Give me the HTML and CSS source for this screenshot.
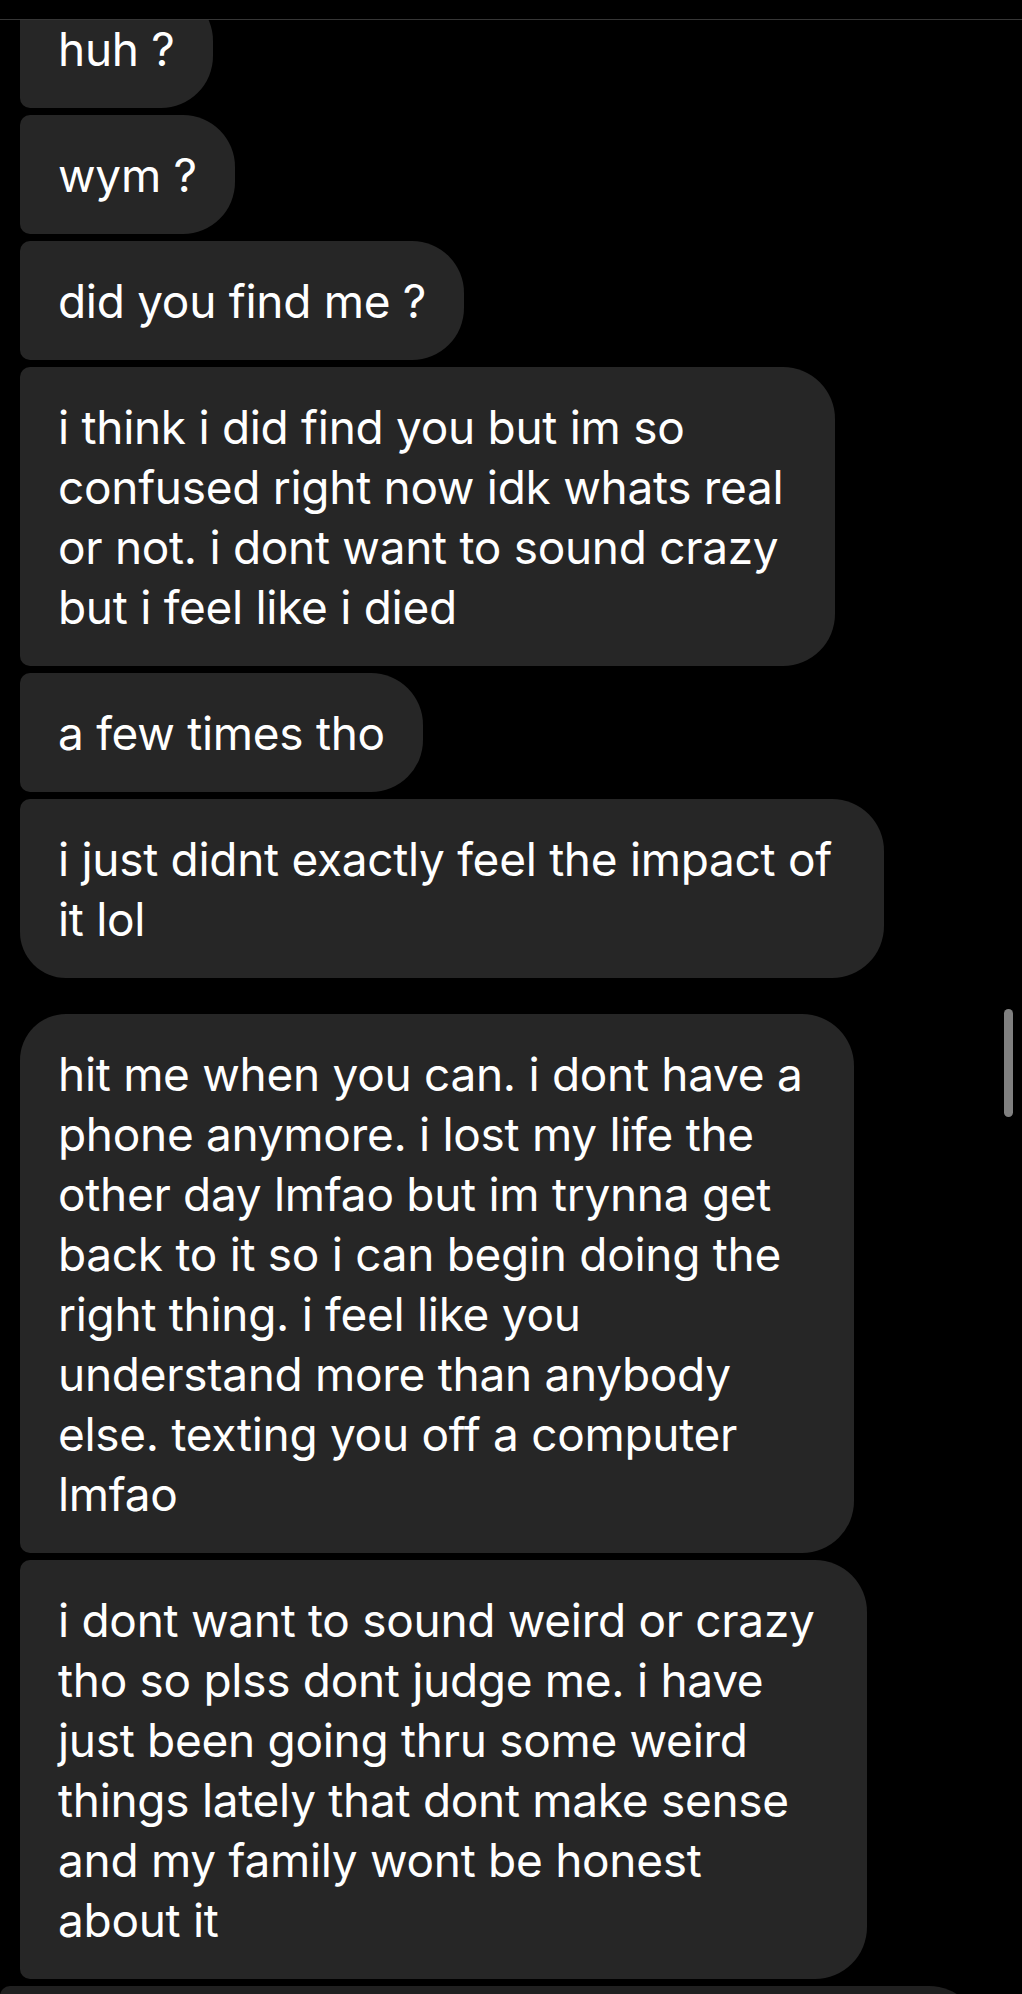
FILE: index.html
```html
<!DOCTYPE html>
<html lang="en">
<head>
<meta charset="UTF-8">
<meta name="viewport" content="width=device-width, initial-scale=1.0">
<title>Messages</title>
<link rel="stylesheet" href="styles.css">
</head>
<body>

<div class="topBar"></div>

<div class="thread">
    <div class="messages">
        <div class="bubble mid">huh ?</div>
        <div class="bubble mid">wym ?</div>
        <div class="bubble mid">did you find me ?</div>
        <div class="bubble mid multi">i think i did find you but im so<br>confused right now idk whats real<br>or not. i dont want to sound crazy<br>but i feel like i died</div>
        <div class="bubble mid">a few times tho</div>
        <div class="bubble last multi">i just didnt exactly feel the impact of<br>it lol</div>

        <!-- next group -->
        <div class="bubble first multi newGroup">hit me when you can. i dont have a<br>phone anymore. i lost my life the<br>other day lmfao but im trynna get<br>back to it so i can begin doing the<br>right thing. i feel like you<br>understand more than anybody<br>else. texting you off a computer<br>lmfao</div>
        <div class="bubble mid multi">i dont want to sound weird or crazy<br>tho so plss dont judge me. i have<br>just been going thru some weird<br>things lately that dont make sense<br>and my family wont be honest<br>about it</div>
        <div class="bubble mid cutoff">&nbsp;</div>
    </div>
    <div class="scrollThumb"></div>
</div>

</body>
</html>
```

FILE: styles.css
```css
html, body {
    margin: 0;
    background-color: #000000;
}

body {
    font-family: Inter, "Liberation Sans", sans-serif;
    color: #ffffff;
    height: 1994px;
    overflow: hidden;
}

.topBar {
    height: 19px;
    border-bottom: 1px solid #363636;
}

.thread {
    position: relative;
    height: 1974px;
    overflow: hidden;
}

.messages {
    display: flex;
    flex-direction: column;
    align-items: flex-start;
    gap: 7px;
    margin-top: -31px;
    padding-left: 20px;
}

.bubble {
    background-color: #262626;
    font-size: 46px;
    line-height: 60px;
    letter-spacing: -0.3px;
    padding: 30px 38px 29px 38px;
    border-radius: 10px 52px 52px 10px;
    white-space: nowrap;
}

.bubble.multi {
    padding-right: 52px;
}

.bubble.first {
    border-radius: 46px 52px 52px 10px;
}

.bubble.last {
    border-radius: 10px 52px 52px 46px;
}

.newGroup {
    margin-top: 29px;
}

.cutoff {
    margin-left: -20px;
    width: 905px;
    background-color: #202020;
}

.scrollThumb {
    position: absolute;
    left: 1004px;
    top: 989px;
    width: 9px;
    height: 108px;
    border-radius: 5px;
    background-color: #808080;
}
```
